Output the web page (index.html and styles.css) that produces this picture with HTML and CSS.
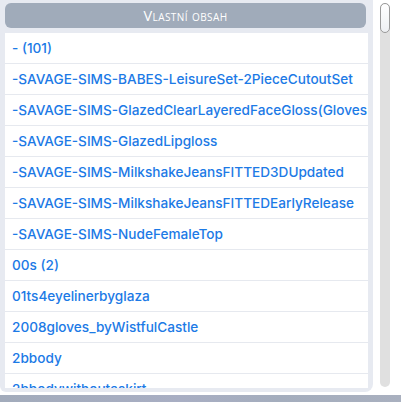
FILE: index.html
```html
<!DOCTYPE html>
<html lang="cs">
<head>
    <meta charset="UTF-8">
    <title>Vlastní obsah</title>
    <link rel="stylesheet" href="styles.css">
</head>
<body>
    <div class="window">
        <div class="panel">
            <div class="panel-header">Vlastní obsah</div>
            <ul class="cc-list">
                <li>- (101)</li>
                <li>-SAVAGE-SIMS-BABES-LeisureSet-2PieceCutoutSet</li>
                <li>-SAVAGE-SIMS-GlazedClearLayeredFaceGloss(Gloves</li>
                <li>-SAVAGE-SIMS-GlazedLipgloss</li>
                <li>-SAVAGE-SIMS-MilkshakeJeansFITTED3DUpdated</li>
                <li>-SAVAGE-SIMS-MilkshakeJeansFITTEDEarlyRelease</li>
                <li>-SAVAGE-SIMS-NudeFemaleTop</li>
                <li>00s (2)</li>
                <li>01ts4eyelinerbyglaza</li>
                <li>2008gloves_byWistfulCastle</li>
                <li>2bbody</li>
                <li>2bbodywithoutaskirt</li>
            </ul>
        </div>
        <div class="scrollbar">
            <div class="thumb"></div>
        </div>
    </div>
    <div class="bottom-strip"></div>
</body>
</html>
```
FILE: styles.css
```css
body {
    margin: 0;
    background: #fff;
    font-family: 'Inter', sans-serif;
    width: 401px;
    height: 402px;
    overflow: hidden;
}

.window {
    display: flex;
    height: 395px;
}

.panel {
    width: 363px;
    height: 389px;
    padding: 3px 5px 0 5px;
    background: #e7eaf1;
    border-radius: 0 0 8px 6px;
    display: flex;
    flex-direction: column;
    gap: 5px;
}

.panel-header {
    height: 25px;
    margin-right: 2px;
    background: #a0abba;
    border-radius: 6px;
    color: #fff;
    font-family: 'Open Sans', sans-serif;
    font-variant: small-caps;
    font-size: 14.5px;
    letter-spacing: 0.4px;
    display: flex;
    align-items: center;
    justify-content: center;
}

.cc-list {
    list-style: none;
    margin: 0;
    padding: 0;
    height: 355px;
    background: #fff;
    overflow: hidden;
}

.cc-list li {
    height: 30px;
    line-height: 30px;
    padding-left: 7px;
    border-bottom: 1px solid #e6e9ef;
    color: #1c7ae6;
    font-size: 13.6px;
    font-weight: 500;
    white-space: nowrap;
}

.scrollbar {
    width: 10px;
    height: 384px;
    margin: 3px 0 0 7px;
    background: #e0e0e0;
    border-radius: 5px;
}

.thumb {
    height: 30px;
    background: linear-gradient(#ffffff, #eef0f3);
    border: 1px solid #9a9a9a;
    border-radius: 5px;
    box-sizing: border-box;
}

.bottom-strip {
    height: 7px;
    background: linear-gradient(to right, #a2abbb, #a8aec3 45%, #a4adbd 70%, #a9b0bf);
}
```
